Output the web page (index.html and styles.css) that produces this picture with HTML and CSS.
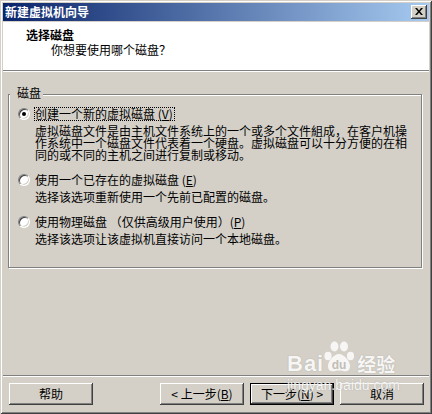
FILE: index.html
```html
<!DOCTYPE html>
<html lang="zh-CN">
<head>
<meta charset="utf-8">
<title>新建虚拟机向导</title>
<link rel="stylesheet" href="styles.css">
</head>
<body>
<div class="window">
  <div class="titlebar">
    <span class="title">新建虚拟机向导</span>
    <span class="close"><svg width="8" height="7" viewBox="0 0 8 7"><path d="M0 0h2l2 2.4L6 0h2L5 3.5 8 7H6L4 4.6 2 7H0l3-3.5z" fill="#000"/></svg></span>
  </div>
  <div class="header">
    <div class="h-title">选择磁盘</div>
    <div class="h-sub">你想要使用哪个磁盘？</div>
  </div>
  <div class="group">
    <span class="legend">磁盘</span>
    <div class="option">
      <div class="opt-row"><span class="radio on"></span><span class="label focus">创建一个新的虚拟磁盘 (<u>V</u>)</span></div>
      <div class="desc">虚拟磁盘文件是由主机文件系统上的一个或多个文件組成，在客户机操<br>作系统中一个磁盘文件代表着一个硬盘。虚拟磁盘可以十分方便的在相<br>同的或不同的主机之间进行复制或移动。</div>
    </div>
    <div class="option">
      <div class="opt-row"><span class="radio"></span><span class="label">使用一个已存在的虚拟磁盘 (<u>E</u>)</span></div>
      <div class="desc">选择该选项重新使用一个先前已配置的磁盘。</div>
    </div>
    <div class="option">
      <div class="opt-row"><span class="radio"></span><span class="label">使用物理磁盘 （仅供高级用户使用）(<u>P</u>)</span></div>
      <div class="desc">选择该选项让该虚拟机直接访问一个本地磁盘。</div>
    </div>
  </div>
  <div class="footer">
    <span class="btn help">帮助</span>
    <span class="btn">&lt; 上一步(<u>B</u>)</span>
    <span class="btn default">下一步(<u>N</u>) &gt;</span>
    <span class="btn">取消</span>
  </div>
  <div class="watermark">
    <div class="wm-logo">
      <span class="wm-bai">Bai</span>
      <svg class="wm-paw" width="32" height="34" viewBox="0 0 32 34">
        <ellipse cx="5" cy="17" rx="3.6" ry="4.2" fill="#fff"/>
        <ellipse cx="11.5" cy="7.5" rx="4" ry="5" fill="#fff"/>
        <ellipse cx="21" cy="7.5" rx="4" ry="5" fill="#fff"/>
        <ellipse cx="27.5" cy="17" rx="3.6" ry="4.2" fill="#fff"/>
        <path d="M16 15c5 0 11 7 11 12 0 5-4 6-7 5-2-.6-6-.6-8 0-3 1-7 0-7-5 0-5 6-12 11-12z" fill="#fff"/>
        <text x="16" y="30" text-anchor="middle" class="wm-du">du</text>
      </svg>
      <span class="wm-jy">经验</span>
    </div>
    <div class="wm-url">jingyan.baidu.com</div>
  </div>
</div>
</body>
</html>
```
FILE: styles.css
```css
html, body {
  margin: 0;
  padding: 0;
  background: #d4d0c8;
}
body {
  font-family: "Noto Sans CJK SC", "Liberation Sans", sans-serif;
  font-size: 12px;
  line-height: 12px;
  color: #000;
}
.window {
  position: relative;
  width: 432px;
  height: 414px;
  box-sizing: border-box;
  padding: 3px;
  background: #d4d0c8;
  display: flex;
  flex-direction: column;
  box-shadow: inset 1px 1px #d4d0c8, inset -1px -1px #404040, inset 2px 2px #fff, inset -2px -2px #808080;
  overflow: hidden;
}
.titlebar {
  height: 18px;
  flex: none;
  margin-bottom: 1px;
  background: linear-gradient(to right, #0a246a, #a6caf0);
  display: flex;
  align-items: center;
  padding: 0 2px;
}
.title {
  color: #fff;
  font-weight: 700;
  flex: 1;
  line-height: 12px;
}
.close {
  width: 16px;
  height: 14px;
  box-sizing: border-box;
  background: #d4d0c8;
  box-shadow: inset -1px -1px #404040, inset 1px 1px #fff, inset -2px -2px #808080;
  display: flex;
  align-items: center;
  justify-content: center;
  padding: 0 1px 1px 0;
}
.close svg { display: block; }
.header {
  flex: none;
  background: #fff;
  border-bottom: 1px solid #808080;
  box-shadow: 0 1px 0 #fff;
  padding: 7px 0 0 23px;
  box-sizing: content-box;
  height: 41px;
}
.h-title {
  font-weight: 700;
  line-height: 12px;
}
.h-sub {
  margin: 3px 0 0 25px;
  line-height: 12px;
}
.group {
  position: relative;
  flex: none;
  margin: 23px 7px 0 5px;
  height: 174px;
  box-sizing: border-box;
  border: 1px solid #808080;
  box-shadow: inset 1px 1px #fff, 1px 1px 0 #fff;
  padding: 12px 0 0 9px;
}
.legend {
  position: absolute;
  left: 1px;
  top: -8px;
  padding: 0 2px 0 7px;
  background: #d4d0c8;
  line-height: 12px;
}
.option + .option {
  margin-top: 12px;
}
.opt-row {
  display: flex;
  align-items: center;
  height: 14px;
  gap: 4px;
}
.radio {
  position: relative;
  width: 12px;
  height: 12px;
  flex: none;
  box-sizing: border-box;
  border-radius: 50%;
  background: #fff;
  border: 1px solid;
  border-color: #808080 #fff #fff #808080;
  box-shadow: inset 1px 1px #404040, inset -1px -1px #d4d0c8;
}
.radio.on::after {
  content: "";
  position: absolute;
  left: 3px;
  top: 3px;
  width: 4px;
  height: 4px;
  border-radius: 50%;
  background: #000;
}
.label {
  border: 1px dotted transparent;
  line-height: 12px;
  padding-right: 1px;
}
.label.focus {
  border-color: #000;
}
.desc {
  margin: 4px 0 0 17px;
  line-height: 12px;
}
.footer {
  margin-top: auto;
  flex: none;
  display: flex;
  gap: 6px;
  border-top: 1px solid #808080;
  box-shadow: inset 0 1px #fff;
  padding: 7px 5px 6px 6px;
}
.btn {
  width: 84px;
  height: 22px;
  box-sizing: border-box;
  display: flex;
  align-items: center;
  justify-content: center;
  background: #d4d0c8;
  box-shadow: inset -1px -1px #404040, inset 1px 1px #fff, inset -2px -2px #808080;
  padding-bottom: 1px;
}
.btn.help {
  margin-right: auto;
}
.btn.default {
  border: 1px solid #000;
}
u {
  text-underline-offset: 1px;
}
.watermark {
  position: absolute;
  left: 287px;
  top: 338px;
  color: #fff;
  opacity: 0.82;
}
.wm-logo {
  display: flex;
  align-items: flex-end;
  height: 35px;
}
.wm-bai {
  font-family: "Liberation Sans", Arial, sans-serif;
  font-weight: 700;
  font-size: 22px;
  line-height: 18px;
  letter-spacing: 1px;
  text-shadow: 0 0 1px rgba(120, 120, 120, 0.7);
}
.wm-paw {
  display: block;
  margin: 0 2px 0 -1px;
}
.wm-du {
  font-family: "Liberation Sans", Arial, sans-serif;
  font-weight: 700;
  font-size: 12px;
  fill: #bdb9b1;
}
.wm-jy {
  font-size: 19px;
  line-height: 18px;
  font-weight: 700;
  text-shadow: 0 0 1px rgba(120, 120, 120, 0.7);
}
.wm-url {
  margin-top: 5px;
  font-family: "Liberation Sans", Arial, sans-serif;
  font-size: 14px;
  line-height: 14px;
  text-shadow: 0 0 1px rgba(120, 120, 120, 0.7);
}
```
